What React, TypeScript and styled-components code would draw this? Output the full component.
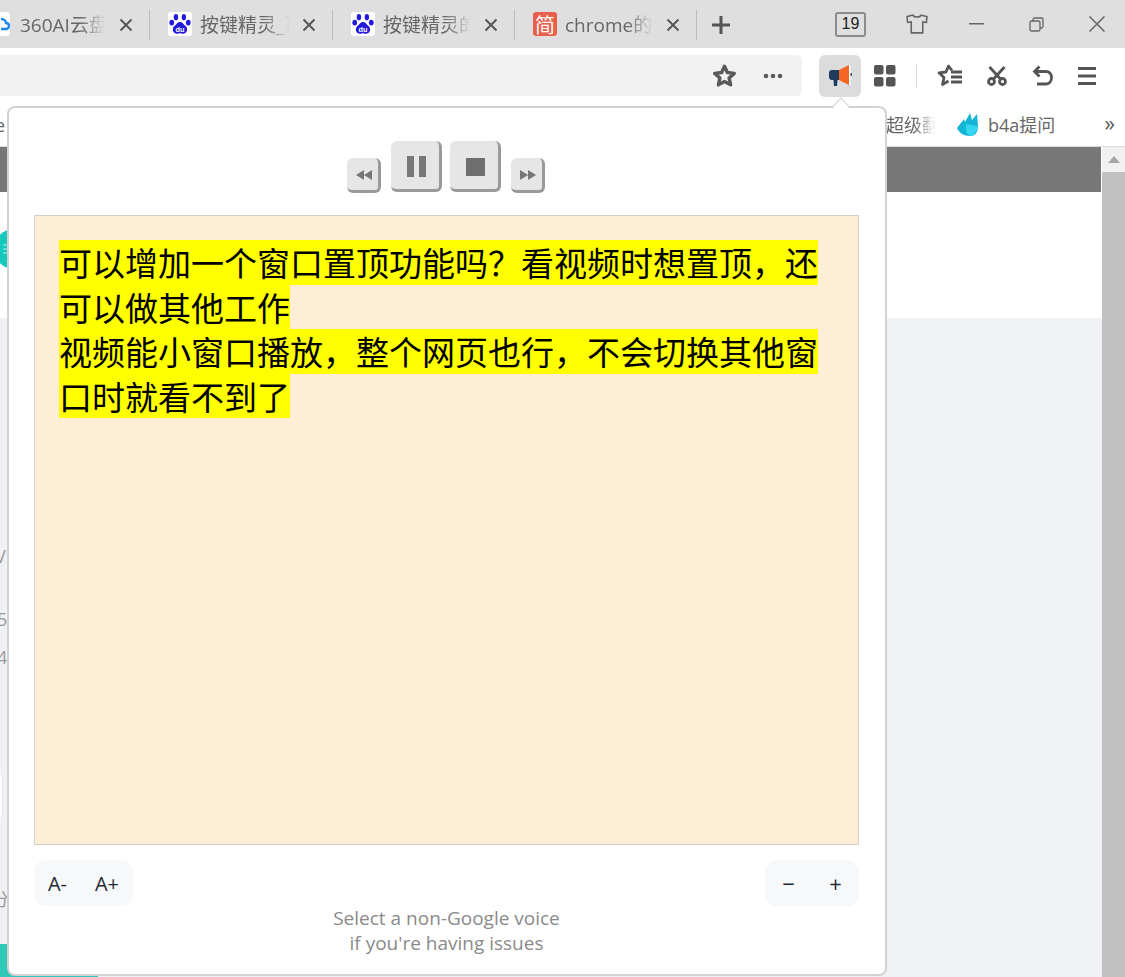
import { createGlobalStyle, styled } from 'styled-components'

const GlobalStyle = createGlobalStyle`
  html, body {
    margin: 0;
    padding: 0;
    width: 1125px;
    height: 977px;
    overflow: hidden;
    background: #ffffff;
    font-family: "Open Sans", "Noto Sans CJK SC", sans-serif;
  }
`

const Browser = styled.div`
  position: relative;
  display: flex;
  flex-direction: column;
  width: 1125px;
  height: 977px;
  overflow: hidden;
`

const TabStrip = styled.div`
  display: flex;
  align-items: center;
  height: 48px;
  background: #dfdfdf;
  flex-shrink: 0;
`

const Tab = styled.div<{ $width: number }>`
  display: flex;
  align-items: center;
  box-sizing: border-box;
  width: ${({ $width }) => $width}px;
  height: 30px;
  margin-top: 2px;
  border-right: 1px solid #bdbdbd;
  flex-shrink: 0;
`

const TabIcon = styled.span<{ $bg: string }>`
  display: flex;
  align-items: center;
  justify-content: center;
  width: 24px;
  height: 24px;
  margin: -2px 8px 0 18px;
  border-radius: 3px;
  background: ${({ $bg }) => $bg};
  flex-shrink: 0;
  color: #ffffff;
  font: 20px "Noto Sans CJK SC", sans-serif;
`

const CloudIcon = styled.span`
  display: flex;
  align-items: center;
  justify-content: flex-end;
  width: 10px;
  height: 24px;
  margin: -2px 10px 0 0;
  border-radius: 0 3px 3px 0;
  background: #ffffff;
  flex-shrink: 0;
`

const TabTitle = styled.span<{ $width: number }>`
  display: block;
  width: ${({ $width }) => $width}px;
  margin-top: -2px;
  overflow: hidden;
  white-space: nowrap;
  font: 19px "Open Sans", "Noto Sans CJK SC", sans-serif;
  color: #666666;
  -webkit-mask-image: linear-gradient(to right, #000 70%, transparent 100%);
  mask-image: linear-gradient(to right, #000 70%, transparent 100%);
  flex-shrink: 0;
`

const TabClose = styled.span`
  display: flex;
  margin-left: auto;
  margin-right: 16px;
  color: #555555;
`

const NewTab = styled.span`
  display: flex;
  margin: 2px 0 0 15px;
  color: #555555;
`

const WindowControls = styled.div`
  display: flex;
  align-items: center;
  margin-left: 105px;
  height: 44px;
  color: #666666;
`

const TabCount = styled.span`
  display: flex;
  align-items: center;
  justify-content: center;
  box-sizing: border-box;
  width: 31px;
  height: 25px;
  border: 2px solid #8c8c8c;
  border-radius: 3px;
  margin-right: 40px;
  font: 16px "Liberation Sans", sans-serif;
  color: #222222;
`

const WindowButton = styled.span<{ $gap: number }>`
  display: flex;
  margin-right: ${({ $gap }) => $gap}px;
`

const Toolbar = styled.div`
  display: flex;
  align-items: center;
  height: 41px;
  margin-top: 7px;
  flex-shrink: 0;
`

const AddressBar = styled.div`
  display: flex;
  align-items: center;
  justify-content: flex-end;
  box-sizing: border-box;
  width: 802px;
  height: 41px;
  padding-right: 19px;
  gap: 27px;
  background: #f2f2f2;
  border-radius: 0 6px 6px 0;
  color: #5a5a5a;
`

const SpeakButton = styled.span`
  display: flex;
  align-items: center;
  justify-content: center;
  width: 42px;
  height: 42px;
  margin-left: 17px;
  border-radius: 6px;
  background: #dcdcdc;
`

const ToolIcon = styled.span<{ $left: number }>`
  display: flex;
  margin-left: ${({ $left }) => $left}px;
  color: #555555;
`

const ToolDivider = styled.span`
  width: 1px;
  height: 24px;
  margin-left: 20px;
  background: #d8d8d8;
`

const BookmarkBar = styled.div`
  display: flex;
  align-items: center;
  box-sizing: border-box;
  height: 51px;
  padding-top: 5px;
  padding-left: 886px;
  flex-shrink: 0;
  border-bottom: 1px solid #dcdcdc;
  font: 18px "Open Sans", "Noto Sans CJK SC", sans-serif;
  color: #666666;
`

const BookmarkFaded = styled.span`
  width: 50px;
  overflow: hidden;
  white-space: nowrap;
  -webkit-mask-image: linear-gradient(to right, #000 55%, transparent 100%);
  mask-image: linear-gradient(to right, #000 55%, transparent 100%);
`

const BookmarkLogo = styled.span`
  display: flex;
  margin: 0 7px 0 21px;
`

const BookmarkMore = styled.span`
  margin-left: auto;
  margin-right: 10px;
  font-size: 21px;
  line-height: 21px;
  color: #555555;
`

const BookmarkPeek = styled.span`
  position: absolute;
  left: -5px;
  top: 113px;
  font: 18px "Open Sans", sans-serif;
  color: #666666;
`

const Viewport = styled.div`
  display: flex;
  flex: 1;
  min-height: 0;
`

const Page = styled.div`
  display: flex;
  flex-direction: column;
  flex: 1;
`

const PageHeader = styled.div`
  height: 45px;
  margin-right: 1px;
  background: #777777;
  flex-shrink: 0;
`

const PageWhite = styled.div`
  height: 126px;
  background: #ffffff;
  flex-shrink: 0;
`

const PageBody = styled.div`
  flex: 1;
  background: #f0f1f5;
`

const Scrollbar = styled.div`
  display: flex;
  flex-direction: column;
  width: 23px;
  background: #f1f1f1;
  flex-shrink: 0;
`

const ScrollArrow = styled.span`
  display: flex;
  align-items: center;
  justify-content: center;
  height: 25px;
`

const ScrollThumb = styled.div`
  flex: 1;
  background: #c0c0c0;
`

const Avatar = styled.span`
  position: absolute;
  left: -6px;
  top: 229px;
  display: flex;
`

const PeekText = styled.span<{ $left: number; $top: number }>`
  position: absolute;
  left: ${({ $left }) => $left}px;
  top: ${({ $top }) => $top}px;
  font: 18px "Open Sans", "Noto Sans CJK SC", sans-serif;
  color: #999999;
`

const PeekBox = styled.div`
  position: absolute;
  left: -12px;
  top: 773px;
  box-sizing: border-box;
  width: 15px;
  height: 46px;
  border: 1px solid #e8e8e8;
  border-radius: 3px;
  background: #ffffff;
`

const PageStripe = styled.div`
  position: absolute;
  left: 0;
  top: 944px;
  width: 98px;
  height: 33px;
  background: #2fc8b8;
`

const Popup = styled.div`
  position: absolute;
  left: 7px;
  top: 106px;
  box-sizing: border-box;
  display: flex;
  flex-direction: column;
  width: 880px;
  height: 870px;
  padding: 0 26px 0 25px;
  background: #ffffff;
  border: 2px solid #d2d2d2;
  border-radius: 8px;
`

const PopupArrow = styled.span`
  position: absolute;
  left: 826px;
  top: -8px;
  width: 11px;
  height: 11px;
  background: #ffffff;
  border-left: 1px solid #d2d2d2;
  border-top: 1px solid #d2d2d2;
  transform: rotate(45deg);
`

const Controls = styled.div`
  display: flex;
  align-items: flex-start;
  justify-content: center;
  gap: 8px;
  height: 107px;
  box-sizing: border-box;
  padding-top: 33px;
  padding-right: 1px;
`

const MediaButton = styled.button<{ $big?: boolean }>`
  display: flex;
  align-items: center;
  justify-content: center;
  box-sizing: border-box;
  width: ${({ $big }) => ($big ? 51 : 34)}px;
  height: ${({ $big }) => ($big ? 51 : 35)}px;
  margin: ${({ $big }) => ($big ? '0' : '17px 2px 0')};
  padding: ${({ $big }) => ($big ? '3px 0 0 3px' : '2px 0 0 3px')};
  border: 0;
  border-right: 3px solid #9a9a9a;
  border-bottom: 3px solid #9a9a9a;
  border-radius: 6px;
  background: #e6e6e6;
`

const TextArea = styled.div`
  box-sizing: border-box;
  height: 630px;
  padding: 24px 24px 0;
  background: #ffeed6;
  border: 1px solid #d6d0c4;
  font: 33px "Noto Sans CJK SC", sans-serif;
  color: #000000;
`

const Line = styled.span`
  display: block;
  width: fit-content;
  height: 44.5px;
  line-height: 44.5px;
  background: #ffff00;
  white-space: nowrap;
  overflow: hidden;
`

const BottomRow = styled.div`
  display: flex;
  justify-content: space-between;
  margin-top: 15px;
`

const ButtonGroup = styled.div<{ $width: number; $size: number }>`
  display: flex;
  align-items: center;
  justify-content: space-around;
  box-sizing: border-box;
  width: ${({ $width }) => $width}px;
  height: 46px;
  border-radius: 12px;
  background: #f7f8fa;
  font: ${({ $size }) => $size}px "Open Sans", sans-serif;
  color: #1f2933;
`

const Hint = styled.div`
  text-align: center;
  font: 19px/25px "Open Sans", sans-serif;
  color: #8a8a8a;
`

const X = () => (
  <svg width="14" height="14" viewBox="0 0 14 14" fill="none" stroke="currentColor" strokeWidth="1.9">
    <path d="M1.5 1.5l11 11M12.5 1.5l-11 11" />
  </svg>
)

const BaiduPaw = () => (
  <svg width="22" height="23" viewBox="0 0 21 22" fill="#2319dc">
    <ellipse cx="6.6" cy="4" rx="2.1" ry="3" />
    <ellipse cx="14.2" cy="4" rx="2.1" ry="3" />
    <ellipse cx="2.6" cy="9.2" rx="2.3" ry="2.8" />
    <ellipse cx="18.4" cy="9.2" rx="2.3" ry="2.8" />
    <path d="M10.5 8.5c2.6 0 3.6 2.6 5.4 4 2 1.6 2.4 7-2.2 7.4-1.4.1-2.2-.6-3.2-.6s-1.8.7-3.2.6C2.7 19.5 3.1 14.1 5.1 12.5c1.8-1.4 2.8-4 5.4-4z" />
    <text x="10.5" y="18" textAnchor="middle" fontSize="7" fontWeight="700" fontFamily="Liberation Sans, sans-serif" fill="#ffffff">du</text>
  </svg>
)

const App = () => {
  return (
    <>
      <GlobalStyle />
      <Browser>
        <TabStrip>
          <Tab $width={150}>
            <CloudIcon>
              <svg width="9" height="14" viewBox="0 0 9 14" fill="none" stroke="#1e88f0" strokeWidth="2.4">
                <path d="M0 2c3 0 5 2 5 4 2 0 3 1.5 3 3s-1.5 3-3 3H0" />
              </svg>
            </CloudIcon>
            <TabTitle $width={85}>360AI云盘</TabTitle>
            <TabClose><X /></TabClose>
          </Tab>
          <Tab $width={183}>
            <TabIcon $bg="#ffffff"><BaiduPaw /></TabIcon>
            <TabTitle $width={90}>按键精灵_百度</TabTitle>
            <TabClose><X /></TabClose>
          </Tab>
          <Tab $width={182}>
            <TabIcon $bg="#ffffff"><BaiduPaw /></TabIcon>
            <TabTitle $width={88}>按键精灵的窗口</TabTitle>
            <TabClose><X /></TabClose>
          </Tab>
          <Tab $width={182}>
            <TabIcon $bg="#e8604c">简</TabIcon>
            <TabTitle $width={88}>chrome的插件</TabTitle>
            <TabClose><X /></TabClose>
          </Tab>
          <NewTab>
            <svg width="18" height="18" viewBox="0 0 18 18" fill="none" stroke="currentColor" strokeWidth="3">
              <path d="M9 0v18M0 9h18" />
            </svg>
          </NewTab>
          <WindowControls>
            <TabCount>19</TabCount>
            <WindowButton $gap={41}>
              <svg width="22" height="20" viewBox="0 0 21 19" fill="none" stroke="currentColor" strokeWidth="1.5">
                <path d="M6.5 1L1 2.5 1.5 8l3.5-.5V18h11V7.5l3.5.5L20 2.5 14.5 1c-1 2.5-7 2.5-8 0z" />
              </svg>
            </WindowButton>
            <WindowButton $gap={45}>
              <svg width="15" height="2" viewBox="0 0 15 2" fill="currentColor">
                <rect width="15" height="1.5" />
              </svg>
            </WindowButton>
            <WindowButton $gap={45}>
              <svg width="15" height="15" viewBox="0 0 15 15" fill="none" stroke="currentColor" strokeWidth="1.3">
                <rect x="1" y="4" width="10" height="10" rx="1.5" />
                <path d="M4 4V2.5C4 1.5 4.5 1 5.5 1h7c1 0 1.5.5 1.5 1.5v7c0 1-.5 1.5-1.5 1.5H11" />
              </svg>
            </WindowButton>
            <WindowButton $gap={0}>
              <svg width="16" height="16" viewBox="0 0 16 16" fill="none" stroke="currentColor" strokeWidth="1.5">
                <path d="M.5.5l15 15M15.5.5l-15 15" />
              </svg>
            </WindowButton>
          </WindowControls>
        </TabStrip>
        <Toolbar>
          <AddressBar>
            <svg width="23" height="24" viewBox="2 2 20 20" fill="none" stroke="currentColor" strokeWidth="3" strokeLinejoin="round">
              <path d="M12 3.5l2.5 5.5 6 .7-4.500 4 1.300 6L12 16.800l-5.300 2.900 1.300-6-4.500-4 6-.7z" />
            </svg>
            <svg width="20" height="6" viewBox="0 0 20 6" fill="currentColor">
              <circle cx="3" cy="3" r="2.3" />
              <circle cx="10" cy="3" r="2.3" />
              <circle cx="17" cy="3" r="2.3" />
            </svg>
          </AddressBar>
          <SpeakButton>
            <svg width="23" height="22" viewBox="0 0 23 22">
              <path d="M0 8c0-1.8 1.2-3 3-3h7v10H8.5L8 21H5l-.5-6H3c-1.8 0-3-1.2-3-3z" fill="#1f3b5c" />
              <path d="M10 5l10-5v20l-10-5z" fill="#f26522" />
              <rect x="20" y="0" width="1.5" height="20" fill="#ffffff" />
              <rect x="21.5" y="8" width="1.5" height="3" fill="#3c5672" />
            </svg>
          </SpeakButton>
          <ToolIcon $left={13}>
            <svg width="22" height="22" viewBox="0 0 22 22" fill="currentColor">
              <rect width="9.5" height="9.5" rx="2" />
              <rect x="12" width="9.5" height="9.5" rx="2" />
              <rect y="12" width="9.5" height="9.5" rx="2" />
              <rect x="12" y="12" width="9.5" height="9.5" rx="2" />
            </svg>
          </ToolIcon>
          <ToolDivider />
          <ToolIcon $left={20}>
            <svg width="25" height="23" viewBox="0 0 25 23" fill="none" stroke="currentColor" strokeWidth="2.8" strokeLinejoin="round">
              <path d="M15 6.5L11.5 2 9 8l-7 .8 5 4.7-1.5 7L11.5 17" />
              <path d="M14 8h11M14 13h11M14 18h11" />
            </svg>
          </ToolIcon>
          <ToolIcon $left={25}>
            <svg width="20" height="20" viewBox="0 0 20 20" fill="none" stroke="currentColor" strokeWidth="2.8">
              <circle cx="4.5" cy="15.5" r="3" />
              <circle cx="15.5" cy="15.5" r="3" />
              <path d="M6.5 13L17.5 1M13.5 13L2.5 1" />
            </svg>
          </ToolIcon>
          <ToolIcon $left={25}>
            <svg width="21" height="21" viewBox="0 0 21 21" fill="none" stroke="currentColor" strokeWidth="2.8">
              <path d="M7.5 1.5L2.5 6.5l5 5" />
              <path d="M2.5 6.5h11.5c3.500 0 5.500 2.500 5.500 6s-2 6.500-5.500 6.500H5" />
            </svg>
          </ToolIcon>
          <ToolIcon $left={25}>
            <svg width="18" height="20" viewBox="0 0 18 20" fill="currentColor">
              <rect y="1" width="18" height="3" />
              <rect y="8.5" width="18" height="3" />
              <rect y="16" width="18" height="3" />
            </svg>
          </ToolIcon>
        </Toolbar>
        <BookmarkBar>
          <BookmarkFaded>超级翻译</BookmarkFaded>
          <BookmarkLogo>
            <svg width="24" height="24" viewBox="0 0 24 24">
              <path d="M0 16L7 7l1 3L13 1l2 7 5-6 1 12c0 5-2 10-8 10C7 24 2 21 0 16z" fill="#12b5d6" />
              <path d="M9 12l11 2 1 3-6 7c-5 0-7-5-6-12z" fill="#35d5f0" />
            </svg>
          </BookmarkLogo>
          <span>b4a提问</span>
          <BookmarkMore>»</BookmarkMore>
        </BookmarkBar>
        <Viewport>
          <Page>
            <PageHeader />
            <PageWhite />
            <PageBody />
          </Page>
          <Scrollbar>
            <ScrollArrow>
              <svg width="12" height="7" viewBox="0 0 12 7" fill="#a6a6a6">
                <path d="M6 0l6 7H0z" />
              </svg>
            </ScrollArrow>
            <ScrollThumb />
          </Scrollbar>
        </Viewport>
        <BookmarkPeek>e</BookmarkPeek>
        <Avatar>
          <svg width="40" height="40" viewBox="0 0 40 40">
            <circle cx="20" cy="20" r="20" fill="#14c8bb" />
            <path d="M9 16h6M9 20h6M9 24h6" stroke="#ffffff" strokeWidth="1.2" opacity="0.7" />
          </svg>
        </Avatar>
        <PeekText $left={-5} $top={544}>V</PeekText>
        <PeekText $left={-3} $top={607}>5</PeekText>
        <PeekText $left={-3} $top={645}>4</PeekText>
        <PeekText $left={-9} $top={885}>分</PeekText>
        <PeekBox />
        <PageStripe />
        <Popup>
          <PopupArrow />
          <Controls>
            <MediaButton>
              <svg width="16" height="10" viewBox="0 0 16 10" fill="#777777">
                <path d="M8 0v10L0 5zM16 0v10L8 5z" />
              </svg>
            </MediaButton>
            <MediaButton $big>
              <svg width="19" height="21" viewBox="0 0 19 21" fill="#777777">
                <rect width="7" height="21" />
                <rect x="12" width="7" height="21" />
              </svg>
            </MediaButton>
            <MediaButton $big>
              <svg width="19" height="18" viewBox="0 0 19 18" fill="#6f6f6f">
                <rect width="19" height="18" />
              </svg>
            </MediaButton>
            <MediaButton>
              <svg width="16" height="10" viewBox="0 0 16 10" fill="#777777">
                <path d="M0 0v10l8-5zM8 0v10l8-5z" />
              </svg>
            </MediaButton>
          </Controls>
          <TextArea>
            <Line>可以增加一个窗口置顶功能吗？看视频时想置顶，还</Line>
            <Line>可以做其他工作</Line>
            <Line>视频能小窗口播放，整个网页也行，不会切换其他窗</Line>
            <Line>口时就看不到了</Line>
          </TextArea>
          <BottomRow>
            <ButtonGroup $width={99} $size={20}>
              <span>A-</span>
              <span>A+</span>
            </ButtonGroup>
            <ButtonGroup $width={94} $size={22}>
              <span>−</span>
              <span>+</span>
            </ButtonGroup>
          </BottomRow>
          <Hint>
            Select a non-Google voice
            <br />
            if you're having issues
          </Hint>
        </Popup>
      </Browser>
    </>
  )
}

export default App
